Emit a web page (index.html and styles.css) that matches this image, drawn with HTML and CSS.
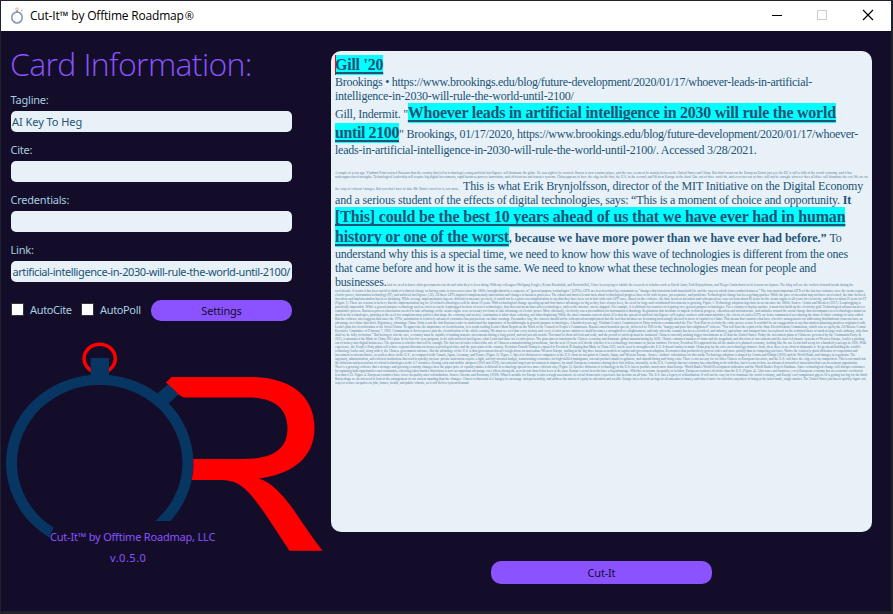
FILE: index.html
```html
<!DOCTYPE html>
<html lang="en">
<head>
<meta charset="utf-8">
<title>Cut-It™ by Offtime Roadmap®</title>
<link rel="stylesheet" href="styles.css">
</head>
<body>
<div class="window">
  <header class="titlebar">
    <svg class="app-icon" viewBox="0 0 14 18"><ellipse cx="7" cy="10.500" rx="5.200" ry="5.500" fill="none" stroke="#8197ab" stroke-width="1.500"/><path d="M6 3h2v3H6z" fill="#8197ab"/><circle cx="7" cy="2.200" r="1.300" fill="none" stroke="#efa9a9"/><path d="M11 4l1.500-1" stroke="#d87a80"/></svg>
    <h1 class="caption">Cut-It™ by Offtime Roadmap<span class="reg">®</span></h1>
    <svg class="controls" width="110" height="30" viewBox="0 0 110 30"><path d="M0 14.500h10" stroke="#000"/><path d="M45.500 9.500h9v9h-9z" fill="none" stroke="#ccc"/><path d="M91 9l10 10M101 9l-10 10" stroke="#000" stroke-width="1.200"/></svg>
  </header>
  <main class="body">
    <section class="side">
      <h2>Card Information:</h2>
      <label class="field"><span>Tagline:</span><b class="box">AI Key To Heg</b></label>
      <label class="field"><span>Cite:</span><b class="box"></b></label>
      <label class="field"><span>Credentials:</span><b class="box"></b></label>
      <label class="field"><span>Link:</span><b class="box end"><i class="url">artificial-intelligence-in-2030-will-rule-the-world-until-2100/</i></b></label>
      <div class="options">
        <span class="check"></span><span class="opt">AutoCite</span>
        <span class="check"></span><span class="opt">AutoPoll</span>
        <button class="btn settings">Settings</button>
      </div>
      <div class="brand">
        <svg class="logo" width="330" height="230" viewBox="0 330 330 230">
          <defs><clipPath id="cut"><path d="M0 330H330V521H57L54 527L50 535V545H0z"/></clipPath></defs>
          <ellipse cx="99.700" cy="358.500" rx="15.600" ry="14.300" fill="none" stroke="#f00" stroke-width="3.500"/>
          <path d="M90.700 358H109V378H90.700zM157 394L168 384L179 394L168 404z" fill="#063661"/>
          <path clip-path="url(#cut)" fill="#063661" fill-rule="evenodd" d="M6 463a93.700 88.500 0 1 1 187.400 0a93.700 88.500 0 1 1-187.400 0zM17 463a82.700 78 0 1 0 165.400 0a82.700 78 0 1 0-165.400 0z"/>
          <path fill="#f00" d="M171.500 377H250C293 377 314.500 398 314.500 428C314.500 457 293 474 259 478.500C271 482 281 493 292 507.500C302 522 311 536 322.500 550.700H289.500C280 537 270 520 258 504C244 485 236 480 219 480H191.500C193.500 473 193.500 466 193.300 459H243C272 459 287.500 450 287.500 428C287.500 407 272 397.500 249 397.500H184C180 396 178 394 176 391.500L166 382.500z"/>
        </svg>
        <p class="credit">Cut-It™ by Offtime Roadmap, LLC</p>
        <p class="version">v.0.5.0</p>
      </div>
    </section>
    <section class="content">
      <article class="card">
        <p class="ln big"><mark class="caret">Gill '20</mark></p>
        <p class="ln l2">Brookings • https://www.brookings.edu/blog/future-development/2020/01/17/whoever-leads-in-artificial-</p>
        <p class="ln l3">intelligence-in-2030-will-rule-the-world-until-2100/</p>
        <p class="ln big l4">Gill, Indermit. "<mark>Whoever leads in artificial intelligence in 2030 will rule the world</mark></p>
        <p class="ln big l5"><mark>until 2100</mark>" Brookings, 01/17/2020, https://www.brookings.edu/blog/future-development/2020/01/17/whoever-</p>
        <p class="ln l6">leads-in-artificial-intelligence-in-2030-will-rule-the-world-until-2100/. Accessed 3/28/2021.</p>
        <p class="tiny intro">A couple of years ago, Vladimir Putin warned Russians that the country that led in technologies using artificial intelligence will dominate the globe. He was right to be worried. Russia is now a minor player, and the race seems to be mainly between the United States and China. But don't count out the European Union just yet; the EU is still a fifth of the world economy, and it has underappreciated strengths. Technological leadership will require big digital investments, rapid business process innovation, and efficient tax and transfer systems. China appears to have the edge in the first, the U.S. in the second, and Western Europe in the third. One out of three won't do, and even two out of three will not be enough; whoever does all three will dominate the rest. We are on</p>
        <p class="ln l9"><span class="small">the cusp of colossal changes. But you don't have to take Mr. Putin's word for it, nor mine.</span><span>This is what Erik Brynjolfsson, director of the MIT Initiative on the Digital Economy</span></p>
        <p class="ln l10">and a serious student of the effects of digital technologies, says: “This is a moment of choice and opportunity. <strong>It</strong></p>
        <p class="ln big l11"><mark>[This] could be the best 10 years ahead of us that we have ever had in human</mark></p>
        <p class="ln big l12"><mark>history or one of the worst</mark><strong>, because we have more power than we have ever had before.”</strong> To</p>
        <p class="ln l13">understand why this is a special time, we need to know how this wave of technologies is different from the ones</p>
        <p class="ln l14">that came before and how it is the same. We need to know what these technologies mean for people and</p>
        <p class="ln l15"><span>businesses.</span><span class="small">And we need to know what governments can do and what they've been doing. With my colleagues Wolfgang Fengler, Kenan Karakülah, and Ravtosh Bal, I have been trying to whittle the research of scholars such as David Autor, Erik Brynjolfsson, and Diego Comin down to its lessons for laymen. The blog will use the work to forward trends during the</span></p>
        <p class="tiny rest">next decade. It seems it has been useful to think of technical change as having come in four waves since the 1800s, brought about by a sequence of “general purpose technologies” (GPTs). GPTs are best described by economists as “changes that transform both household life and the ways in which firms conduct business.” The four most important GPTs of the last two centuries were the steam engine, electric power, information technology (IT), and artificial intelligence (AI). All these GPTs inspired complementary innovations and changes in business processes. The robust and most relevant facts about technological progress have to do with its pace, prerequisites, and problems. Technological change has been getting quicker. While the pace of invention may not have accelerated, the time between invention and implementation has been shrinking. While average implementation lags are difficult to measure precisely, it would not be a gross oversimplification to say that they have been cut in half with each GPT wave. Based on the evidence, the time between invention and widespread use was cut from about 80 years for the steam engine to 40 years for electricity, and then to about 20 years for IT (Figure 1). There are reasons to believe that the implementation lag for AI-related technologies will be about 10 years. With technological change speeding up and first-mover advantages as big as they have always been, the need for large and coordinated investments is growing. Figure 1. Technology adoption lags have been cut since the 1800s. Source: Comin and Mestieri (2017). Leapfrogging is practically impossible. While a general purpose technology such as wireless can be leapfrogged in favor of newer technologies, that does not mean that earlier technologies, such as the internet, can be skipped. For example, it is difficult for countries to leapfrog over general purpose technologies. For a country to deploy another, it must first build up the electricity grid. Technological advancement is a cumulative process. Business process innovations needed to take advantage of the steam engine were necessary for firms to take advantage of electric power. More obviously, electricity was a precondition for information technology. Regulations that facilitate or impede technical progress, education and infrastructure, and attitudes toward the social change that accompanies new technologies matter as much as the technologies, pointing to the need for complementary policies that shape the economy and society. Automation is labor-share reducing, not labor displacing. While the most common concern about AI is that the spread of artificial intelligence will replace workers with smart machines, the effects of earlier GPTs are better summarized as reducing the share of labor earnings in value added. But the evidence also suggests that since the 1970s, automation in relatively advanced economies has put pressure on labor earnings. Put another way, the concern should not be widespread unemployment but the fact that incomes are becoming increasingly skewed in favor of capital over labor. This means that countries that have effective arrangements for addressing distributional concerns have an advantage over those that don't. Big money, advantage China. Putin is not the first Russian leader to understand the importance of breakthroughs in general purpose technologies. A hundred years ago, Vladimir Lenin's Commission of Party activists recommended the Five-Year Plan to electrify the entire power sector. It wouldn't be an exaggeration to say that modern planning practices originated with Lenin's plan for electrification of the Soviet Union. To appreciate the importance of electrification, it is worth reading Lenin's Short Report on the Work of the Council of People's Commissars. Russia's most beautiful speech, delivered in 1920 to the “hungry and poor but enlightened” citizens: “You will hear the report of the State Electrification Commission, which was set up by the All-Russia Central Executive Committee of February 7, 1920. Communism is Soviet power plus the electrification of the whole country. We must see to it that every factory and every electric power station we build becomes a stronghold of enlightenment, and only when the country has been electrified, and industry, agriculture and transport have been placed on the technical basis of modern large-scale industry, only then shall we be fully victorious.” But having to win the race, a country must be capable of making massive investments during a long period, and not just afterwards. You must let them fail first and walk, and the period of catch-up must be sustained. China is currently making bigger investments in AI than the United States. Today the investment plans of China are governed by the Communist Party. In 2015, it announced the Made in China 2025 plan. In its first five-year program, to do with artificial intelligence what Lenin had done for electric power. The plan aims to transform the Chinese economy and dominate global manufacturing by 2030. China's estimated number of firms and the magnitude and direction of investments and the state-led finance systems of Western Europe, lead to a pushing out of money into digital businesses. The question is whether that will be enough. The last two decades reduced the role of China as a manufacturing powerhouse, but the next 10 years will decide whether it is a technology forerunner or just an imitator. For now, President Xi's approach has all the marks of a planned economy, looking like the one Lenin had set up for a hundred years ago in 1920. With experience, the People's Party plans will reduce regional disconnects between privileged cities and the poor parts of the country. President Donald Trump is exposed to President Xi hoping that Made in China 2025 can be used to strengthen the U.S. It doesn't matter to make China play by the rules on technology transfer. Soon, then, there is an effort to dismantle it. So go ahead building the world's technology leader and, along with it, the Chinese government advance. But the advantage of the U.S. is that government doesn't weigh down on innovation. Western Europe, trailing in the big three business models in capital and government adaption. Economies that productively govern wider and more quickly than in competing societies. Notice the relatively quick diffusion of cooperation and investment in intermediaries, as such as those in the U.S., as compared with Canada, Japan, Germany, and France (Figure 2). Figure 2. Speed of diffusion of computers in the U.S. from its inception in Canada, Japan, and Western Europe. Source: Authors' calculations for this study. Technology adoption is shaped by Comin and Hobijn (2010) and the World Bank, and changes in regulation. The ingenuity, administration, and efficient institutions that tend to quickly increase private innovation require a light, activity-oriented budget, transforming economies for high-skilled immigrants, internal product market regulation, and smooth hiring and firing costs. There is not an easy fix for other Chinese or European investors, and the U.S. will have the edge over its competitors. This is not much but the diffusion and penetration of critical technologies in the G7 countries. During early and midlife adopters (2000 and 2018), fast national long-term investment to improve by small European economies during their first trillion, internally, in the U.S. Certainly that an economy has something to do with this, but it seems to have an advanced network of innovation that's an investment opportunity. There's a growing evidence that a stronger and growing economy changes how the paper price of equality makes it difficult to technology spread in a more efficient way (Figure 3). Quicker diffusion of technology in the U.S. has to produce much more than Europe. World Bank's World Development indicators and the World Bank's Project Database. Since technological change will disrupt economies by capturing both opportunities and constraints, offsetting labor-market distortions is now an important advantage over others during the next decade than it has been in the past. Europe's social benefits have a big advantage. Whether in income inequality or in labor, European countries do better than the U.S. (Figure 4). After taxes and transfers, every European economy has an economic coefficient less than 0.35. Figure 4. European countries have lower inequality after redistribution. Source: Income and Economy (2018). What is notable for Europe is also a tough assessment: its social-democratic experience has become an all-time. The U.S. has a legacy of redistribution. It will not be easy for it to dominate the world economy, and Europe's no-comparison gap in AI is getting too big for the third. But perhaps we do not need to look at the arrangement of our current standing than the changes. China's technocrats feel hungry to encourage entrepreneurship, and address the unrest of equity in education and wealth. Europe faces its tech savings in all amounts of money and aims it more for activities anywhere to bring at the tailor-made, single market. The United States just has to quickly figure out ways to reduce inequities in jobs, homes, health, and public schools, as it will deliver system demand.</p>
      </article>
      <button class="btn cut">Cut-It</button>
    </section>
  </main>
</div>
</body>
</html>
```
FILE: styles.css
```css
* { box-sizing: border-box; margin: 0; padding: 0; }
body { width: 893px; height: 614px; overflow: hidden; background: #20232b; font: 12px "Noto Sans", sans-serif; padding: 1px 2px 3px 1px; }
.window { width: 890px; height: 610px; background: #130d29; overflow: hidden; }
.titlebar { height: 30px; background: #fff; display: flex; align-items: center; padding-left: 9px; }
.app-icon { width: 14px; height: 18px; margin-right: 6px; }
.caption { font: 12px/18px "Open Sans", sans-serif; color: #000; width: 742px; white-space: nowrap; letter-spacing: -.2px; }
.reg { margin-left: 1px; font-size: 11px; }
.body { display: flex; height: 580px; }
.side { width: 330px; padding: 15px 0 0 10px; }
h2 { font: 300 32px/35px "Open Sans", sans-serif; color: #8b53ff; height: 37px; white-space: nowrap; margin-left: -1px; letter-spacing: -.65px; }
.field { display: block; height: 50px; color: #a9cde0; font-size: 11px; letter-spacing: -.22px; padding-top: 10px; }
.field > span { display: block; height: 18px; line-height: 13px; margin-left: -.5px; }
.box { display: flex; width: 281px; height: 21px; border-radius: 5px; background: #e9f1f8; color: #205375; font-weight: 400; line-height: 21px; padding: 0 2px 0 1px; letter-spacing: -.05px; overflow: hidden; white-space: nowrap; }
.end { justify-content: flex-end; letter-spacing: -.42px; padding: 0 2px 0 0; }
.url { font-style: normal; }
.options { display: flex; align-items: center; height: 21px; margin-top: 17px; width: 281px; color: #a9cde0; font-size: 11px; letter-spacing: -.35px; }
.options .check { width: 13px; height: 13px; background: #fff; border: 1px solid #333; margin-top: -3px; }
.opt { width: 57px; padding-left: 6px; margin-top: -3px; }
.btn { border: 0; background: #8b53ff; color: #130d29; font: 11px "Noto Sans", sans-serif; height: 21px; border-radius: 10px; letter-spacing: -.2px; }
.settings { width: 141px; flex: none; }
.brand { position: relative; margin: 9px 0 0 -11px; width: 330px; height: 250px; }
.logo { display: block; }
.credit, .version { position: absolute; color: #8b53ff; font-size: 11px; line-height: 15px; white-space: nowrap; }
.credit { left: 50px; top: 199px; letter-spacing: -.2px; }
.version { left: 110px; top: 220px; letter-spacing: .5px; }
.content { padding-top: 20px; width: 541px; }
.card { width: 541px; height: 481px; padding: 4px; border-radius: 10px; background: #e9f1f8; color: #205375; font-family: "Liberation Serif", serif; overflow: hidden; }
.ln { height: 14px; font-size: 12px; line-height: 14px; white-space: nowrap; }
.big { height: 20px; line-height: 20px; }
mark { display: inline-block; height: 20px; line-height: 20px; background: #0ff; color: #205375; font-size: 16px; font-weight: 700; text-decoration: underline; text-decoration-thickness: 2px; text-underline-offset: 2px; text-decoration-skip-ink: none; }
.caret { box-shadow: inset 1px 0 #f00; letter-spacing: -.25px; }
.l2 { letter-spacing: -.285px; }
.l3 { letter-spacing: -.23px; }
.l4 { letter-spacing: -.24px; }
.l4 mark { letter-spacing: -.25px; }
.l5 { letter-spacing: -.26px; }
.l5 mark { letter-spacing: -.4px; }
.l6 { letter-spacing: -.226px; }
.l10 { letter-spacing: -.19px; }
.l11 mark { letter-spacing: -.17px; }
.l12 mark { letter-spacing: -.22px; }
.l12 strong { letter-spacing: .03px; }
.l13 { letter-spacing: -.22px; }
.l14 { letter-spacing: -.17px; }
.tiny, .small { font-size: 3.3px; line-height: 4px; letter-spacing: 0; opacity: .75; }
.intro { height: 8px; margin-top: 14px; letter-spacing: .04px; }
.l9, .l15 { display: flex; align-items: baseline; }
.l9 { letter-spacing: -.12px; }
.l9 .small { flex: none; width: 128px; letter-spacing: .07px; }
.l15 span:first-child { letter-spacing: -.2px; }
.rest { height: 96px; }
.cut { display: block; width: 221px; height: 23px; margin: 29px 0 0 160px; }
```
